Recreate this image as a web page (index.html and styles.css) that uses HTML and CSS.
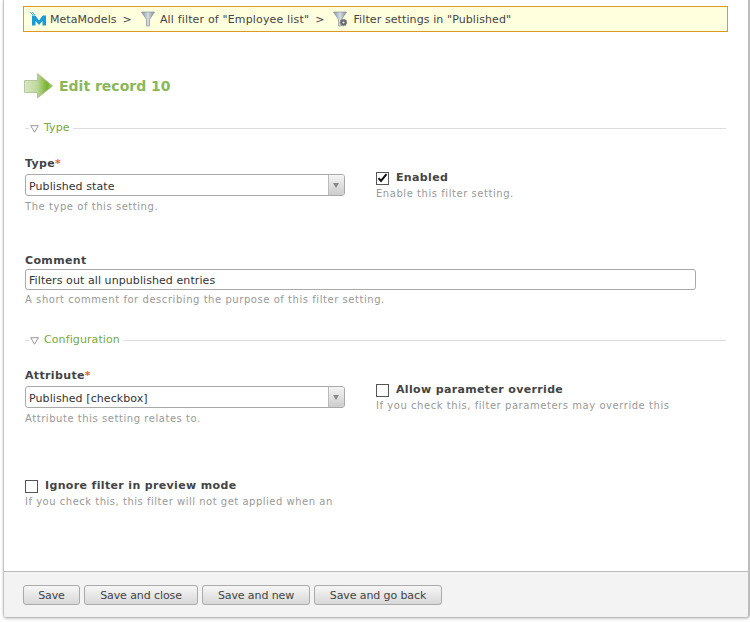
FILE: index.html
```html
<!DOCTYPE html>
<html lang="en">
<head>
<meta charset="utf-8">
<title>Edit record 10</title>
<link rel="stylesheet" href="styles.css">
</head>
<body>
<div class="panel">
  <div class="content">
    <nav class="crumbs">
      <svg class="ic-mm" width="17" height="16" viewBox="0 0 17 16"><path d="M2 14.500V4.500h3.200L9 9.500l3.800-5H16v10h-3.500V10L9 14 5.500 10v4.500z" fill="#1a9bd6"/><g fill="#35b5e5"><rect x="0" y="1" width="1" height="1"/><rect x="2" y="1" width="1" height="1"/><rect x="1" y="2" width="1" height="1"/><rect x="3" y="2" width="1" height="1"/><rect x="2" y="3" width="1" height="1"/><rect x="4" y="3" width="1" height="1"/></g></svg>
      <span class="crumb crumb-first">MetaModels</span><span class="sep">&gt;</span>
      <svg class="ic-f" width="14" height="16" viewBox="0 0 14 16"><defs><linearGradient id="fg" x1="0" x2="1"><stop offset="0" stop-color="#7f919b"/><stop offset=".5" stop-color="#d5dee3"/><stop offset="1" stop-color="#7c8b94"/></linearGradient></defs><path d="M.5 1h13L8.500 8.500V15H5.500V8.500z" fill="url(#fg)" stroke="#8c979c" stroke-width=".7"/></svg>
      <span class="crumb crumb-mid">All filter of "Employee list"</span><span class="sep">&gt;</span>
      <svg class="ic-f2" width="15" height="16" viewBox="0 0 15 16"><path d="M.5 1h13L8.500 8.500V15H5.500V8.500z" fill="url(#fg)" stroke="#8c979c" stroke-width=".7"/><circle cx="10.500" cy="11.500" r="3.200" fill="#666" stroke="#888" stroke-width="1.200" stroke-dasharray="1.200 1"/><circle cx="10.500" cy="11.500" r="1.100" fill="#eee"/></svg>
      <span class="crumb">Filter settings in "Published"</span>
    </nav>

    <h1 class="title">
      <svg width="30" height="26" viewBox="0 0 30 26"><defs><linearGradient id="ag" x1="0" x2="1" y1="0" y2="0"><stop offset="0" stop-color="#d8e8c4"/><stop offset=".45" stop-color="#bcd89c"/><stop offset=".8" stop-color="#7ab22e"/><stop offset="1" stop-color="#a8cc78"/></linearGradient></defs><path d="M.5 7.500H13.500V.5L28.700 13 13.500 25V19.500H.5z" fill="url(#ag)" stroke="#a9bd92" stroke-width=".8"/></svg>
      <span>Edit record 10</span>
    </h1>

    <fieldset class="group group-type">
      <legend><svg width="9" height="8" viewBox="0 0 9 8"><path d="M.7.7h7.600L4.500 7.200z" fill="none" stroke="#999" stroke-width="1"/></svg><span>Type</span></legend>
      <div class="row row-a">
        <div class="widget">
          <label class="lbl">Type<em>*</em></label>
          <div class="select"><span class="val">Published state</span><span class="arrow"></span></div>
          <p class="help">The type of this setting.</p>
        </div>
        <div class="widget check-w">
          <div class="check"><span class="box on"><svg width="11" height="10" viewBox="0 0 11 10"><path d="M1.500 5.200 4 8 9.500 1.200" fill="none" stroke="#111" stroke-width="2"/></svg></span><label class="lbl">Enabled</label></div>
          <p class="help">Enable this filter setting.</p>
        </div>
      </div>
      <div class="wide">
        <label class="lbl">Comment</label>
        <div class="input">Filters out all unpublished entries</div>
        <p class="help">A short comment for describing the purpose of this filter setting.</p>
      </div>
    </fieldset>

    <fieldset class="group group-conf">
      <legend><svg width="9" height="8" viewBox="0 0 9 8"><path d="M.7.7h7.600L4.500 7.200z" fill="none" stroke="#999" stroke-width="1"/></svg><span>Configuration</span></legend>
      <div class="row row-b">
        <div class="widget">
          <label class="lbl">Attribute<em>*</em></label>
          <div class="select"><span class="val">Published [checkbox]</span><span class="arrow"></span></div>
          <p class="help">Attribute this setting relates to.</p>
        </div>
        <div class="widget check-w">
          <div class="check"><span class="box"></span><label class="lbl">Allow parameter override</label></div>
          <p class="help">If you check this, filter parameters may override this</p>
        </div>
      </div>
      <div class="widget check-w single">
        <div class="check"><span class="box"></span><label class="lbl">Ignore filter in preview mode</label></div>
        <p class="help help-tight">If you check this, this filter will not get applied when an</p>
      </div>
    </fieldset>
  </div>
  <div class="footer">
    <button class="btn b1">Save</button>
    <button class="btn b2">Save and close</button>
    <button class="btn b3">Save and new</button>
    <button class="btn b4">Save and go back</button>
  </div>
</div>
</body>
</html>
```
FILE: styles.css
```css
* { box-sizing: border-box; }
html, body { margin: 0; padding: 0; height: 622px; overflow: hidden; background: #fff; }
body { font-family: "DejaVu Sans", Verdana, sans-serif; font-size: 11px; color: #444; }
.panel {
  margin-left: 3px;
  width: 747px;
  height: 618px;
  border-left: 1px solid #c4c4c4;
  border-right: 2px solid #bcbcbc;
  border-bottom: 1px solid #bbb;
  border-radius: 0 0 4px 4px;
  box-shadow: 0 1px 3px rgba(0, 0, 0, .2);
  display: flex;
  flex-direction: column;
}
.content { flex: 1; padding: 6px 18px 0 19px; }
.crumbs {
  width: 705px;
  height: 26px;
  border: 1px solid #dd9a22;
  background: #ffd;
  display: flex;
  align-items: center;
  padding-left: 6px;
  color: #444;
  letter-spacing: .1px;
}
.crumbs svg { flex: none; }
.crumb { white-space: nowrap; }
.crumb-first { letter-spacing: .05px; }
.crumb-mid { letter-spacing: .16px; }
.ic-mm { margin-right: 3px; }
.sep { margin: 0 9px 0 6px; }
.ic-f { margin-right: 5px; }
.ic-f2 { margin-right: 5px; }
.title {
  margin: 41px 0 0 1px;
  height: 26px;
  display: flex;
  align-items: center;
  gap: 5px;
  font-size: 14px;
  font-weight: bold;
  color: #8ab858;
}
.group { margin: 0; padding: 0; border: 0; border-top: 1px solid #ddd; min-width: 0; margin-left: 2px; width: 701px; }
.group legend { padding: 0 3px 0 1px; margin-left: 4px; display: flex; align-items: center; color: #77a83a; font-size: 11px; line-height: 14px; letter-spacing: .1px; }
.group legend svg { margin: 1px 5px 0 0; }
.group-type { margin-top: 22px; height: 212px; }
.group-conf { height: 220px; }
.row { display: flex; }
.row-a { margin-top: 22px; height: 97px; }
.row-b { margin-top: 22px; height: 110px; }
.widget { width: 351px; flex: none; }
.lbl { font-weight: bold; display: block; line-height: 14px; color: #444; letter-spacing: .35px; }
.lbl em { color: #e8671b; font-style: normal; }
.select {
  margin-top: 3px;
  width: 320px;
  height: 22px;
  border: 1px solid #aaa;
  border-radius: 3px;
  display: flex;
  align-items: center;
  justify-content: space-between;
  padding-left: 3px;
  color: #333;
  letter-spacing: .08px;
}
.val { white-space: nowrap; padding-top: 2px; }
.arrow {
  width: 16px;
  height: 20px;
  border-left: 1px solid #bbb;
  border-radius: 0 2px 2px 0;
  background: linear-gradient(#f4f4f4, #ccc);
  position: relative;
}
.arrow::after {
  content: "";
  position: absolute;
  left: 4px;
  top: 8px;
  border: 3.5px solid transparent;
  border-top: 5px solid #888;
  border-bottom: 0;
}
.help { margin: 4px 0 0; font-size: 10px; line-height: 13px; color: #999; letter-spacing: .55px; white-space: nowrap; }
.check { display: flex; align-items: center; height: 14px; gap: 7px; }
.check-w { padding-top: 14px; }
.check-w .help { margin-top: 2px; }
.check-w .help-tight { letter-spacing: .51px; }
.box { width: 13px; height: 13px; border: 1px solid #555; background: #fff; display: flex; align-items: center; justify-content: center; flex: none; }
.input {
  margin-top: 1px;
  width: 671px;
  height: 21px;
  border: 1px solid #aaa;
  border-radius: 3px;
  padding-left: 3px;
  line-height: 21px;
  color: #333;
  letter-spacing: .08px;
}
.wide .help { margin-top: 3px; }
.single { padding-top: 0; }
.footer {
  height: 46px;
  flex: none;
  background: #f3f3f3;
  border-top: 1px solid #bbb;
  padding: 13px 0 0 19px;
  display: flex;
  align-items: flex-start;
  gap: 4px;
  border-radius: 0 0 3px 3px;
}
.btn {
  height: 20px;
  border: 1px solid #aaa;
  border-radius: 3px;
  background: linear-gradient(#f6f6f6, #d8d8d8);
  font: 11px "DejaVu Sans", Verdana, sans-serif;
  letter-spacing: -.1px;
  color: #444;
  padding: 0;
}
.b1 { width: 57px; }
.b2 { width: 114px; }
.b3 { width: 108px; }
.b4 { width: 128px; }
```
